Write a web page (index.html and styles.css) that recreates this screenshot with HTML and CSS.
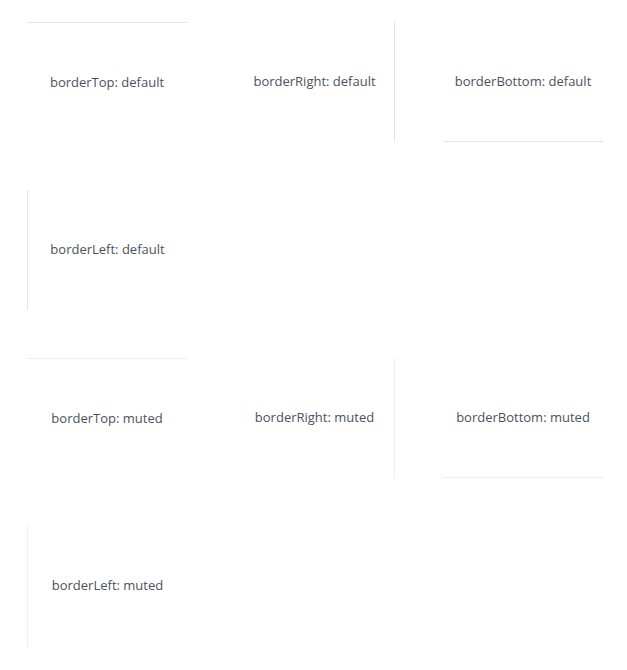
FILE: index.html
```html
<!DOCTYPE html>
<html>
<head>
<meta charset="utf-8">
<link rel="stylesheet" href="styles.css">
</head>
<body>
<div class="page">
  <div class="group">
    <div class="box top default">borderTop: default</div>
    <div class="box right default">borderRight: default</div>
    <div class="box bottom default">borderBottom: default</div>
    <div class="box left default">borderLeft: default</div>
  </div>
  <div class="group">
    <div class="box top muted">borderTop: muted</div>
    <div class="box right muted">borderRight: muted</div>
    <div class="box bottom muted">borderBottom: muted</div>
    <div class="box left muted">borderLeft: muted</div>
  </div>
</div>
</body>
</html>
```
FILE: styles.css
```css
html, body {
  margin: 0;
  padding: 0;
  background: #ffffff;
}
body {
  font-family: "Open Sans", "Noto Sans", sans-serif;
  font-size: 13px;
  color: #4a5260;
}
.page {
  padding: 22px 0 0 27px;
  display: flex;
  flex-direction: column;
  gap: 48px;
}
.group {
  display: grid;
  grid-template-columns: repeat(3, 160px);
  grid-auto-rows: 120px;
  gap: 48px;
}
.box {
  box-sizing: border-box;
  display: flex;
  align-items: center;
  justify-content: center;
  padding-bottom: 2px;
}
.default { --bc: #e1e4e8; }
.muted { --bc: #eceef1; }
.top { border-top: 1px solid var(--bc); }
.right { border-right: 1px solid var(--bc); }
.bottom { border-bottom: 1px solid var(--bc); }
.left { border-left: 1px solid var(--bc); }
```
